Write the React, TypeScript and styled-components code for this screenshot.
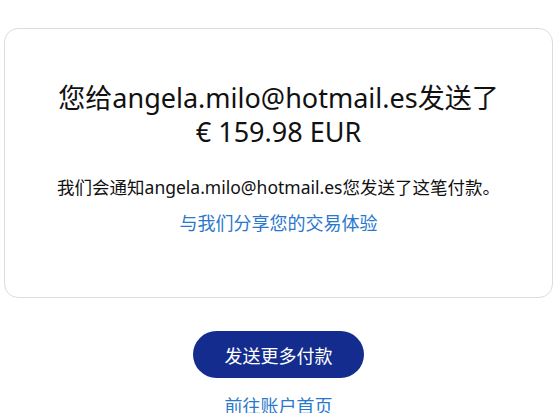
import React from 'react';
import styled, { createGlobalStyle } from 'styled-components';

const GlobalStyle = createGlobalStyle`
  html, body {
    margin: 0;
    padding: 0;
    background: #ffffff;
  }
  body {
    font-family: "Noto Sans", "Noto Sans CJK SC", sans-serif;
    color: #001435;
  }
`;

const Page = styled.div`
  display: flex;
  flex-direction: column;
  align-items: center;
  padding: 28px 4px 0;
  height: 413px;
  box-sizing: border-box;
  overflow: hidden;
  & > * {
    flex-shrink: 0;
  }
`;

const Card = styled.div`
  width: 100%;
  box-sizing: border-box;
  height: 270px;
  border: 1px solid #dcdcdc;
  border-radius: 14px;
  display: flex;
  flex-direction: column;
  align-items: center;
  padding-top: 52px;
  text-align: center;
`;

const Title = styled.h1`
  margin: 0;
  font-size: 27px;
  font-weight: 400;
  line-height: 34px;
  color: #111111;
`;

const Note = styled.p`
  margin: 27px 0 0;
  font-size: 17.5px;
  line-height: 22px;
  color: #111111;
`;

const TextLink = styled.a<{ $gap: number }>`
  display: block;
  margin-top: ${(p) => p.$gap}px;
  font-size: 18px;
  line-height: 22px;
  color: #2a78cc;
  text-decoration: none;
  cursor: pointer;
`;

const PrimaryButton = styled.button`
  margin-top: 33px;
  width: 171px;
  height: 47px;
  border: none;
  border-radius: 24px;
  background: #142c8e;
  color: #ffffff;
  font-family: "Noto Sans", "Noto Sans CJK SC", sans-serif;
  font-size: 18px;
  cursor: pointer;
`;

const App = () => {
  return (
    <>
      <GlobalStyle />
      <Page>
        <Card>
          <Title>
            您给angela.milo@hotmail.es发送了
            <br />
            € 159.98 EUR
          </Title>
          <Note>我们会通知angela.milo@hotmail.es您发送了这笔付款。</Note>
          <TextLink $gap={14}>与我们分享您的交易体验</TextLink>
        </Card>
        <PrimaryButton>发送更多付款</PrimaryButton>
        <TextLink $gap={17}>前往账户首页</TextLink>
      </Page>
    </>
  );
};

export default App;
